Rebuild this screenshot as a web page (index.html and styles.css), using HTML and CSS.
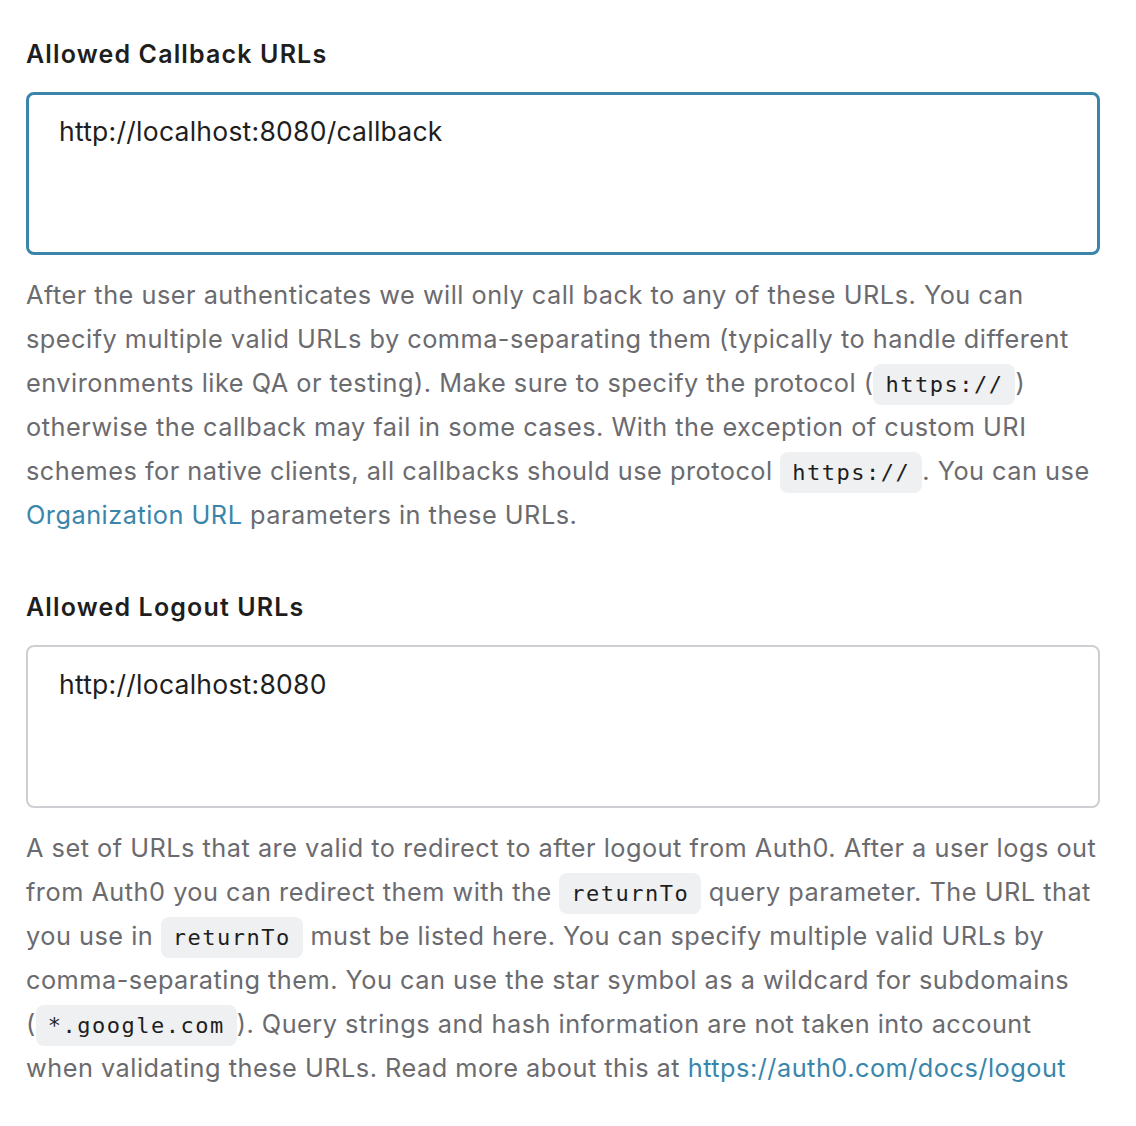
FILE: index.html
```html
<!DOCTYPE html>
<html lang="en">
<head>
<meta charset="utf-8">
<title>Application URIs</title>
<link rel="stylesheet" href="styles.css">
</head>
<body>
<main class="form">
  <section class="field">
    <label class="label" for="cb">Allowed Callback URLs</label>
    <textarea id="cb" class="input input--focus">http://localhost:8080/callback</textarea>
    <p class="help">After the user authenticates we will only call back to any of these URLs. You can specify multiple valid URLs by comma-separating them (typically to handle different environments like QA or testing). Make sure to specify the protocol (<code class="code">https://</code>) otherwise the callback may fail in some cases. With the exception of custom URI schemes for native clients, all callbacks should use protocol <code class="code">https://</code>. You can use <a class="link" href="#">Organization URL</a> parameters in these URLs.</p>
  </section>
  <section class="field">
    <label class="label" for="lo">Allowed Logout URLs</label>
    <textarea id="lo" class="input">http://localhost:8080</textarea>
    <p class="help">A set of URLs that are valid to redirect to after logout from Auth0. After a user logs out from Auth0 you can redirect them with the <code class="code">returnTo</code> query parameter. The URL that you use in <code class="code">returnTo</code> must be listed here. You can specify multiple valid URLs by comma-separating them. You can use the star symbol as a wildcard for subdomains (<code class="code">*.google.com</code>). Query strings and hash information are not taken into account when validating these URLs. Read more about this at <a class="link" href="#">https://auth0.com/docs/logout</a></p>
  </section>
</main>
</body>
</html>
```
FILE: styles.css
```css
html, body {
  margin: 0;
  padding: 0;
  background: #ffffff;
}
body {
  font-family: Inter, "Noto Sans", sans-serif;
  color: #1e1e1e;
}
.form {
  padding: 36px 36px 0 26px;
  display: flex;
  flex-direction: column;
  gap: 52px;
}
.field {
  display: flex;
  flex-direction: column;
}
.label {
  font-size: 25px;
  font-weight: 600;
  letter-spacing: 1.15px;
  line-height: 36px;
  color: #1e1e1e;
  margin-bottom: 20px;
}
.input {
  box-sizing: border-box;
  width: 1074px;
  height: 163px;
  border: 2px solid #cfcfd3;
  border-radius: 8px;
  padding: 19px 31px;
  font-family: Inter, "Noto Sans", sans-serif;
  font-size: 26.5px;
  letter-spacing: 0.25px;
  line-height: 36px;
  color: #1e1e1e;
  resize: none;
  outline: none;
  margin: 0;
}
.input--focus {
  border: 3px solid #3a86ab;
  padding: 18px 30px;
}
.help {
  margin: 18px 0 0;
  font-size: 25.3px;
  letter-spacing: 0.5px;
  line-height: 44px;
  color: #6b6b6f;
}
.code {
  font-family: "DejaVu Sans Mono", monospace;
  font-size: 22px;
  line-height: 20px;
  letter-spacing: 1.5px;
  color: #1e1e1e;
  background: #eff0f2;
  border-radius: 8px;
  padding: 8px 12px;
}
.link {
  color: #3a86ab;
  text-decoration: none;
}
```
